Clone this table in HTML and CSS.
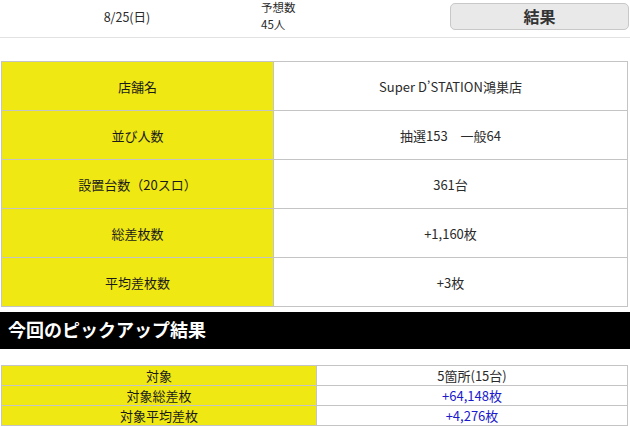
FILE: index.html
```html
<!DOCTYPE html>
<html lang="ja">
<head>
<meta charset="utf-8">
<link rel="stylesheet" href="styles.css">
</head>
<body>
<div class="top">
  <div class="date">8/25(日)</div>
  <div class="forecast"><div class="f-label">予想数</div><div class="f-val">45人</div></div>
  <div class="btn-wrap"><div class="btn">結果</div></div>
</div>
<table class="info">
  <tr><th>店舗名</th><td>Super D’STATION鴻巣店</td></tr>
  <tr><th>並び人数</th><td>抽選153　一般64</td></tr>
  <tr><th>設置台数（20スロ）</th><td>361台</td></tr>
  <tr><th>総差枚数</th><td>+1,160枚</td></tr>
  <tr><th>平均差枚数</th><td>+3枚</td></tr>
</table>
<h2 class="heading">今回のピックアップ結果</h2>
<table class="pick">
  <tr><th>対象</th><td>5箇所(15台)</td></tr>
  <tr><th>対象総差枚</th><td class="blue">+64,148枚</td></tr>
  <tr><th>対象平均差枚</th><td class="blue">+4,276枚</td></tr>
</table>
</body>
</html>
```
FILE: styles.css
```css
* { box-sizing: border-box; }
html, body { margin: 0; padding: 0; background: #fff; }
body {
  font-family: "Noto Sans CJK JP", "Noto Sans", sans-serif;
  font-size: 12px;
  color: #2a2a2a;
  width: 630px;
}
.top {
  display: flex;
  height: 38px;
  border-bottom: 1px solid #e2e2e2;
  align-items: center;
}
.date {
  width: 254px;
  text-align: center;
  font-size: 12.5px;
  padding-bottom: 4px;
}
.forecast {
  width: 196px;
  padding-left: 7px;
  font-size: 11.5px;
  line-height: 17px;
  padding-bottom: 5px;
}
.btn-wrap { flex: 1; padding-bottom: 4px; }
.btn {
  height: 27px;
  background: #e9e9e9;
  border: 1px solid #c8c8c8;
  border-radius: 5px;
  text-align: center;
  font-size: 16px;
  font-weight: bold;
  line-height: 24px;
  color: #333;
  margin-right: 1px;
}
table {
  border-collapse: collapse;
  margin-left: 1px;
  width: 627px;
}
th, td {
  border: 1px solid #c4c4c4;
  text-align: center;
  font-weight: normal;
  padding: 0;
}
th { background: #efe812; color: #1a1a1a; }
.info { margin-top: 23px; }
.info th { width: 272px; height: 49px; font-size: 13px; }
.info td { height: 49px; font-size: 13px; }
.heading {
  margin: 5px 0 0;
  background: #000;
  color: #fff;
  font-size: 18px;
  font-weight: bold;
  height: 37px;
  line-height: 34px;
  padding-left: 8px;
}
.pick { margin-top: 16px; }
.pick th { width: 315px; height: 20px; font-size: 13px; line-height: 18px; }
.pick td { height: 20px; font-size: 13px; line-height: 18px; }
.pick td.blue { color: #1a1acc; }
```
